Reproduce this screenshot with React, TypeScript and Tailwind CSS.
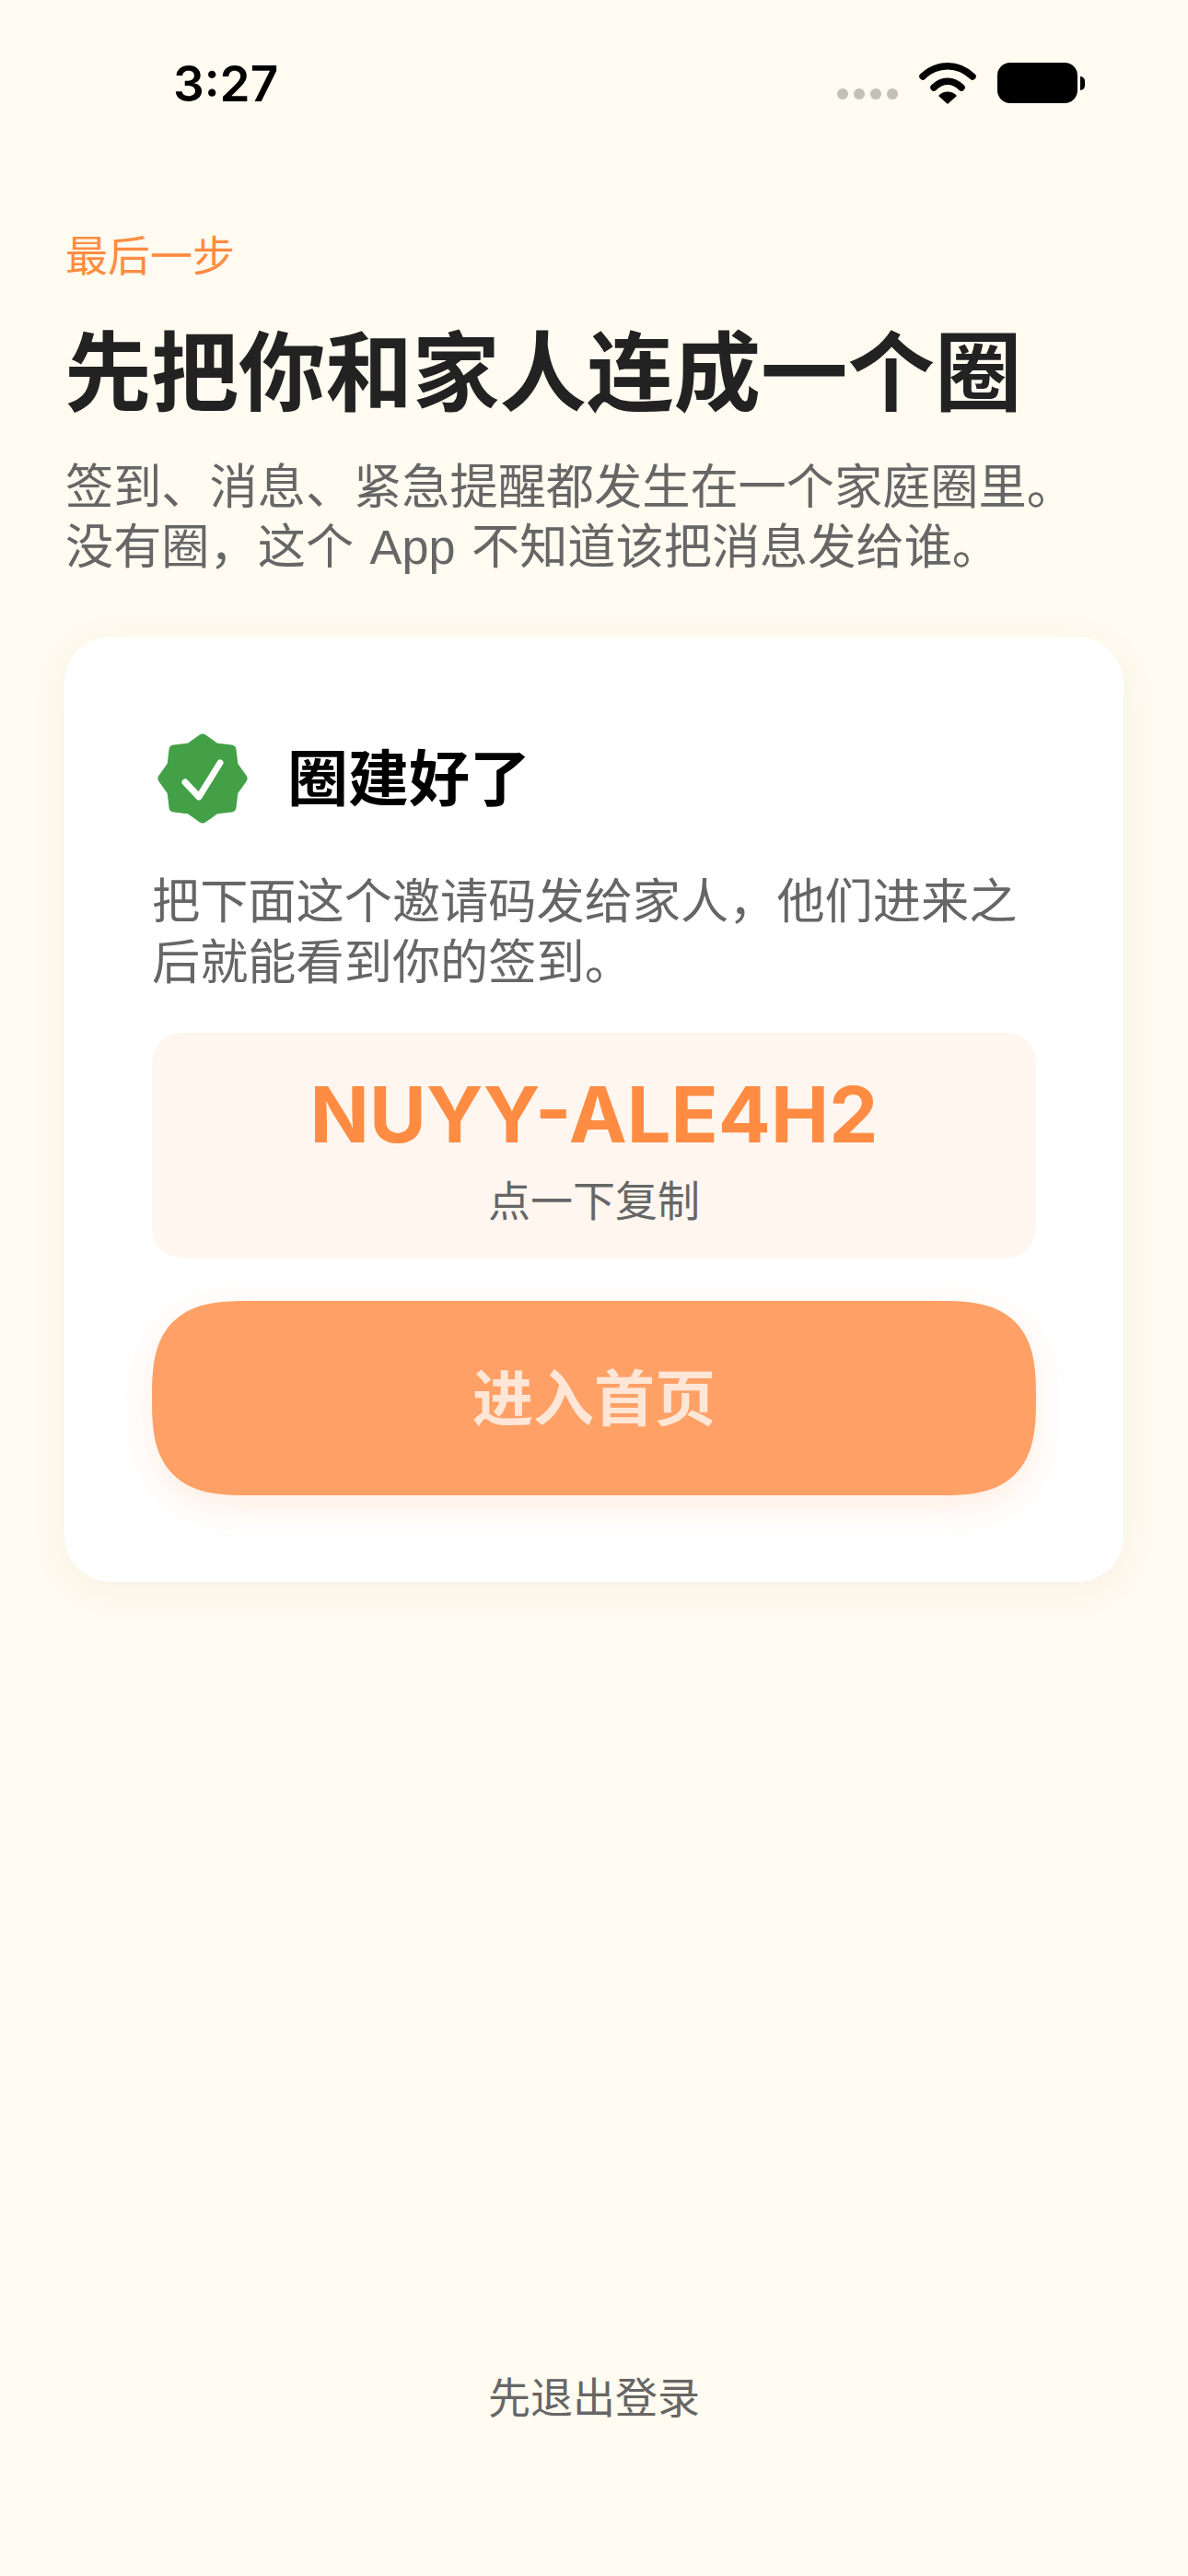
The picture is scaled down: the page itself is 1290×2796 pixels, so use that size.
import React from 'react';

const VerifiedBadge = () => (
  <svg width="100" height="100" viewBox="-50 -50 100 100" fill="none">
    <polygon
      points="0,-43 14,-33 31,-31 33,-14 43,0 33,14 31,31 14,33 0,43 -14,33 -31,31 -33,14 -43,0 -33,-14 -31,-31 -14,-33"
      fill="#43a047"
      stroke="#43a047"
      strokeWidth="11"
      strokeLinejoin="round"
    />
    <path d="M-19 4 L-4 20 L19 -17" stroke="#ffffff" strokeWidth="7" strokeLinecap="round" strokeLinejoin="round" />
  </svg>
);

const WifiIcon = () => (
  <svg width="62" height="46" viewBox="0 0 62 46" fill="none">
    <path d="M4 16 C20 1 42 1 58 16" stroke="#000" strokeWidth="7.5" strokeLinecap="round" />
    <path d="M16 28 C25 19 37 19 46 28" stroke="#000" strokeWidth="7.5" strokeLinecap="round" />
    <path d="M31 45 L22 37 C27 32 35 32 40 37 Z" fill="#000" stroke="#000" strokeWidth="1.5" strokeLinejoin="round" />
  </svg>
);

const StatusBar = () => (
  <div className="flex h-[220px] items-start justify-between pl-[188px] pr-[112px] pt-[59px]">
    <span className="font-['Inter',sans-serif] text-[53px] leading-[64px] font-semibold text-black">3:27</span>
    <div className="flex items-center gap-[23px] pt-[8px]">
      <div className="flex gap-[6px] pt-[24px]">
        {[0, 1, 2, 3].map((i) => (
          <span key={i} className="h-[12px] w-[12px] rounded-full bg-[#c2c0b8]" />
        ))}
      </div>
      <WifiIcon />
      <div className="flex items-center gap-[3px]">
        <div className="h-[44px] w-[87px] rounded-[14px] bg-black" />
        <div className="h-[15px] w-[5px] rounded-r-full bg-black" />
      </div>
    </div>
  </div>
);

export default function App() {
  return (
    <div
      lang="zh-CN"
      className="flex h-[2796px] w-[1290px] flex-col overflow-hidden bg-[#fffbf0] font-['Liberation_Sans','Noto_Sans_CJK_SC',sans-serif]"
    >
      <StatusBar />

      <div className="flex flex-1 flex-col px-[70px]">
        <p className="pl-[1px] pt-[30px] text-[46px] leading-[56px] text-[#ff8c42]">最后一步</p>
        <h1 className="mt-[40px] text-[94.5px] leading-[120px] font-bold text-[#222222]">先把你和家人连成一个圈</h1>
        <p className="mt-[31px] pl-[1px] text-[52.2px] leading-[65px] text-[#666666] [word-spacing:3px]">
          签到、消息、紧急提醒都发生在一个家庭圈里。
          <br />
          没有圈，这个 App 不知道该把消息发给谁。
        </p>

        <div className="mt-[64px] flex h-[1026px] flex-col rounded-[50px] bg-white px-[95px] pt-[102px] shadow-[0_8px_40px_rgba(120,90,40,0.06)]">
          <div className="flex items-center gap-[42px] pl-[5px]">
            <VerifiedBadge />
            <h2 className="pt-[3px] text-[66px] leading-[100px] font-bold text-black">圈建好了</h2>
          </div>
          <p className="mt-[50px] text-[52.2px] leading-[66px] text-[#666666]">
            把下面这个邀请码发给家人，他们进来之
            <br />
            后就能看到你的签到。
          </p>

          <div className="mt-[43px] flex h-[244px] flex-col items-center rounded-[32px] bg-[#fff6f0] pt-[35px]">
            <span className="font-['Inter',sans-serif] text-[84.5px] leading-[106px] font-bold text-[#ff8c42]">NUYY-ALE4H2</span>
            <span className="mt-[13px] text-[46px] leading-[58px] text-[#666666]">点一下复制</span>
          </div>

          <button className="mt-[47px] h-[211px] w-full rounded-[105px] [corner-shape:superellipse(1.5)] bg-[#ffa066] pt-[4px] text-[66px] font-bold text-[#ffe6d6] shadow-[0_12px_36px_rgba(255,140,66,0.16)]">
            进入首页
          </button>
        </div>

        <div className="mt-auto pb-[164px] text-center text-[46px] leading-[58px] text-[#666666]">先退出登录</div>
      </div>
    </div>
  );
}
